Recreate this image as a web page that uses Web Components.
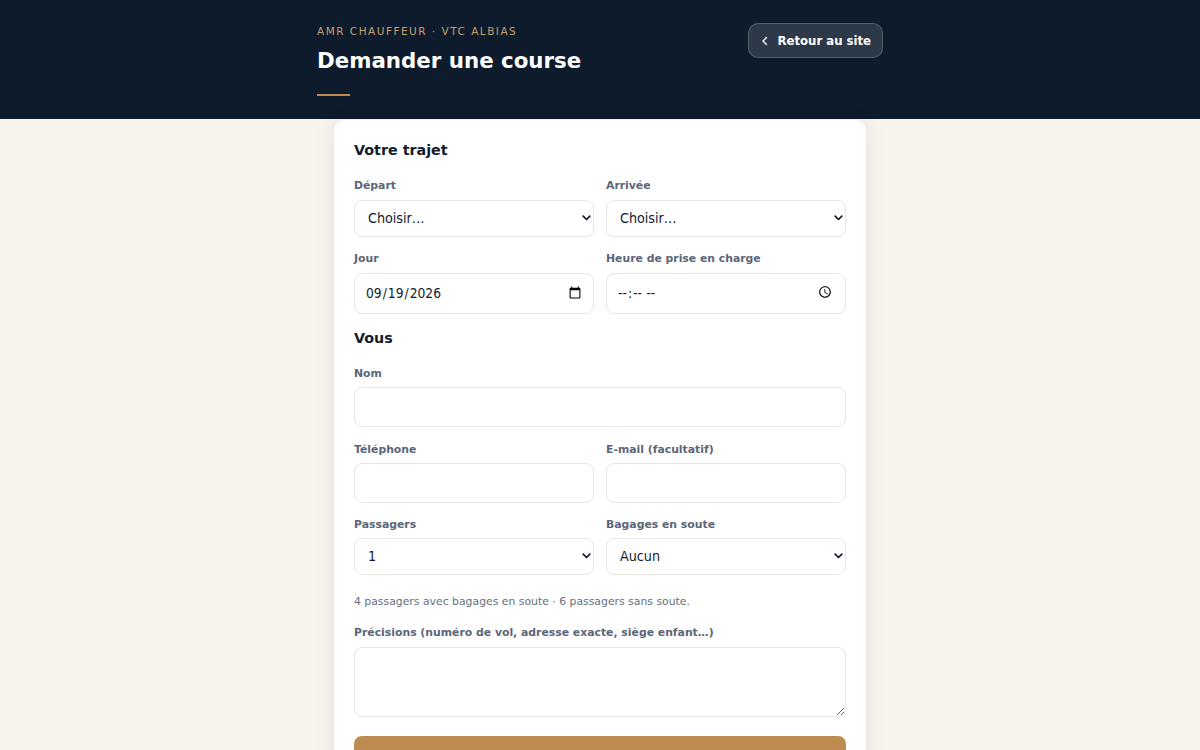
<!DOCTYPE html>
<html lang="fr">
<head>
<meta charset="utf-8">
<title>Demander une course</title>
<style>
  html, body { margin: 0; padding: 0; background: #f7f4ed; }
  body { font-family: "DejaVu Sans", sans-serif; color: #111c2d; }
</style>
</head>
<body>
<course-header eyebrow="AMR CHAUFFEUR · VTC ALBIAS" heading="Demander une course" back="Retour au site"></course-header>
<form-card>
  <form-section heading="Votre trajet">
    <field-row>
      <form-field label="Départ" kind="select" options="Choisir…"></form-field>
      <form-field label="Arrivée" kind="select" options="Choisir…"></form-field>
    </field-row>
    <field-row>
      <form-field label="Jour" kind="date" value="2026-09-19"></form-field>
      <form-field label="Heure de prise en charge" kind="time"></form-field>
    </field-row>
  </form-section>
  <form-section heading="Vous">
    <form-field label="Nom" kind="text"></form-field>
    <field-row>
      <form-field label="Téléphone" kind="tel"></form-field>
      <form-field label="E-mail (facultatif)" kind="email"></form-field>
    </field-row>
    <field-row>
      <form-field label="Passagers" kind="select" options="1,2,3,4,5,6" compact></form-field>
      <form-field label="Bagages en soute" kind="select" options="Aucun" compact></form-field>
    </field-row>
    <form-hint>4 passagers avec bagages en soute · 6 passagers sans soute.</form-hint>
    <form-field label="Précisions (numéro de vol, adresse exacte, siège enfant…)" kind="textarea"></form-field>
  </form-section>
  <submit-bar></submit-bar>
</form-card>

<script>
class CourseHeader extends HTMLElement {
  connectedCallback() {
    const root = this.attachShadow({ mode: 'open' });
    root.innerHTML = `
      <style>
        :host { display: block; background: #0e1b2d; height: 119px; box-sizing: border-box; }
        .wrap { width: 566px; margin: 0 auto; display: flex; justify-content: space-between; align-items: flex-start; }
        .titles { padding-top: 24px; }
        .eyebrow { font-size: 10.5px; line-height: 14px; letter-spacing: 1.49px; color: #c4a06c; }
        h1 { margin: 7px 0 0; font-size: 21.35px; line-height: 32px; font-weight: 700; color: #fff; }
        .rule { width: 33px; height: 2px; background: #bd8a4f; margin-top: 17px; }
        a {
          margin-top: 23px; display: flex; align-items: center; gap: 8px; box-sizing: border-box;
          height: 35px; padding: 0 11px; border-radius: 10px; text-decoration: none;
          background: rgba(255,255,255,.13); border: 1px solid rgba(255,255,255,.2);
          color: #fff; font-size: 11.7px; font-weight: 700;
        }
        svg { display: block; }
      </style>
      <div class="wrap">
        <div class="titles">
          <div class="eyebrow">${this.getAttribute('eyebrow')}</div>
          <h1>${this.getAttribute('heading')}</h1>
          <div class="rule"></div>
        </div>
        <a href="#">
          <svg width="10" height="10" viewBox="0 0 10 10" fill="none" stroke="#fff" stroke-width="1.4" stroke-linecap="round" stroke-linejoin="round"><path d="M6.5 1.5 3 5l3.5 3.5"/></svg>
          ${this.getAttribute('back')}
        </a>
      </div>`;
  }
}

class FormCard extends HTMLElement {
  connectedCallback() {
    const root = this.attachShadow({ mode: 'open' });
    root.innerHTML = `
      <style>
        :host {
          display: block; box-sizing: border-box; width: 532px; margin: 1px auto 24px; padding: 20px 20px 24px;
          background: #fff; border-radius: 12px; box-shadow: 0 4px 24px rgba(13,27,46,.08);
        }
      </style>
      <slot></slot>`;
  }
}

class FormSection extends HTMLElement {
  connectedCallback() {
    const root = this.attachShadow({ mode: 'open' });
    root.innerHTML = `
      <style>
        :host { display: block; }
        :host(:not(:first-child)) { margin-top: 14px; }
        h2 { margin: 0 0 19px; font-size: 14.3px; line-height: 20px; font-weight: 700; color: #111c2d; }
        .body { display: flex; flex-direction: column; gap: 15px; }
      </style>
      <h2>${this.getAttribute('heading')}</h2>
      <div class="body"><slot></slot></div>`;
  }
}

class FieldRow extends HTMLElement {
  connectedCallback() {
    const root = this.attachShadow({ mode: 'open' });
    root.innerHTML = `
      <style>:host { display: grid; grid-template-columns: 1fr 1fr; gap: 12px; }</style>
      <slot></slot>`;
  }
}

class FormField extends HTMLElement {
  connectedCallback() {
    const root = this.attachShadow({ mode: 'open' });
    const kind = this.getAttribute('kind');
    let control;
    if (kind === 'select') {
      const opts = this.getAttribute('options').split(',').map(o => `<option>${o}</option>`).join('');
      // native arrow is too big here, so draw the chevron over the select
      control = `<div class="pick"><select>${opts}</select>
        <svg width="9" height="6" viewBox="0 0 9 6" fill="none" stroke="#111c2d" stroke-width="1.7" stroke-linecap="round" stroke-linejoin="round"><path d="M1.2 1.2 4.5 4.5 7.8 1.2"/></svg></div>`;
    } else if (kind === 'textarea') {
      control = '<textarea></textarea>';
    } else {
      const value = this.getAttribute('value') || '';
      control = `<input type="${kind}" value="${value}" class="${kind}">`;
    }
    root.innerHTML = `
      <style>
        :host { display: block; }
        label { display: block; font-size: 10.85px; line-height: 14px; font-weight: 700; color: #5b6678; margin-bottom: 7px; }
        input, select, textarea {
          display: block; width: 100%; box-sizing: border-box;
          font: 14px "DejaVu Sans Condensed", "DejaVu Sans", sans-serif; color: #111c2d; background: #fff;
          border: 1px solid #e8e6e1; border-radius: 8px; padding: 9px 12px; outline: none;
        }
        /* text inputs sit a little higher than selects and date pickers */
        input { height: 40px; margin: -1px 0 0.5px; }
        input.date, input.time { height: 41px; margin: 0; padding: 8px 9px 10px 10px; font-size: 13.7px; }
        input.time { padding-right: 10px; }
        .pick { position: relative; }
        :host([compact]) .pick { margin-top: -1px; }
        select { appearance: none; height: 37px; margin: 0; padding: 7px 24px 9px 13px; font-size: 14.2px; }
        .pick svg { position: absolute; right: 3px; top: 15px; pointer-events: none; }
        textarea { height: 70px; margin: 0; resize: vertical; }
      </style>
      <label>${this.getAttribute('label')}</label>
      ${control}`;
  }
}

class FormHint extends HTMLElement {
  connectedCallback() {
    const root = this.attachShadow({ mode: 'open' });
    root.innerHTML = `
      <style>:host { display: block; font-size: 10.85px; line-height: 14px; color: #667080; margin-top: 5px; margin-bottom: 2px; }</style>
      <slot></slot>`;
  }
}

class SubmitBar extends HTMLElement {
  connectedCallback() {
    const root = this.attachShadow({ mode: 'open' });
    root.innerHTML = `
      <style>
        :host { display: block; margin-top: 19px; }
        button { display: block; width: 100%; height: 48px; border: 0; border-radius: 8px; background: #bd8a4f; }
      </style>
      <button type="submit"></button>`;
  }
}

customElements.define('course-header', CourseHeader);
customElements.define('form-card', FormCard);
customElements.define('form-section', FormSection);
customElements.define('field-row', FieldRow);
customElements.define('form-field', FormField);
customElements.define('form-hint', FormHint);
customElements.define('submit-bar', SubmitBar);
</script>
</body>
</html>
